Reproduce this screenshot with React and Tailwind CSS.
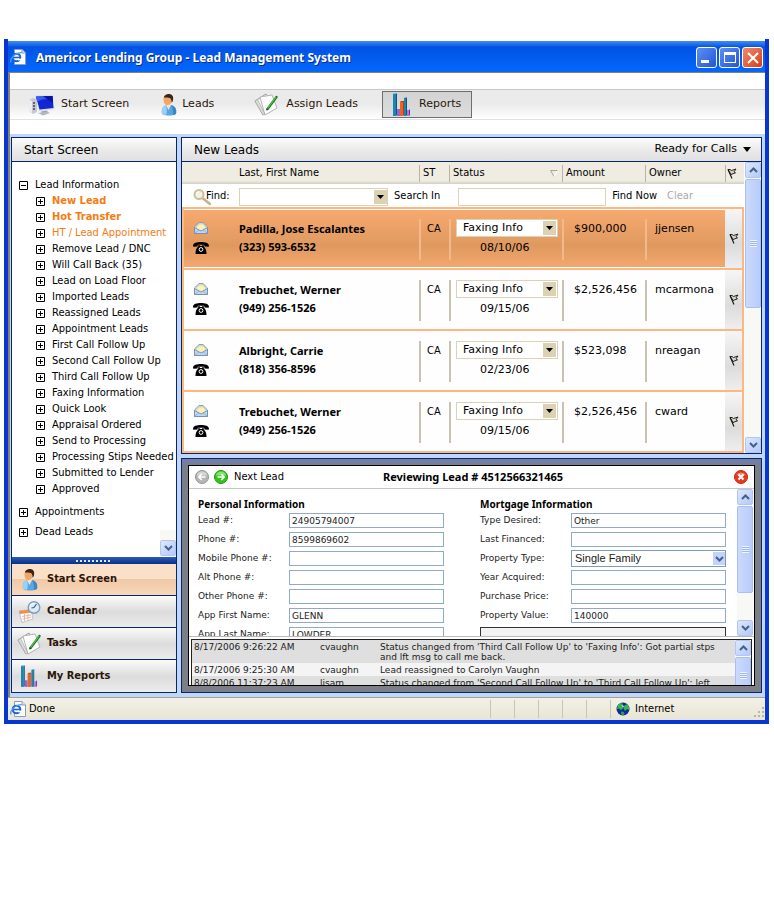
import React from "react";

const tahoma = "font-['DejaVu_Sans_Condensed','DejaVu_Sans',sans-serif]";
const verdana = "font-['DejaVu_Sans',sans-serif]";
const trebuchet = "font-['Noto_Sans','Open_Sans',sans-serif]";

/* ---------- icons ---------- */

function BrowserIcon({ className }) {
  return (
    <svg className={className} viewBox="0 0 16 16" aria-hidden="true">
      <path d="M4.500 .5h7.500l3.500 3.500v11.500h-11z" fill="#fff" stroke="#8a9cc0" />
      <path d="M12 .5v3.500h3.500" fill="#dfe6f5" stroke="#8a9cc0" />
      <circle cx="6.500" cy="8.500" r="3.800" fill="#fff" stroke="#1f63d6" strokeWidth="2" />
      <path d="M3 8.500h7" stroke="#1f63d6" strokeWidth="1.600" />
      <path d="M8 9.600h4v1.800H8z" fill="#fff" />
      <path d="M1.200 13.500C-.8 10.500 5 3.500 11.800 3.600" fill="none" stroke="#4f9cf0" strokeWidth="1.300" />
    </svg>
  );
}

function MonitorIcon({ className }) {
  return (
    <svg className={className} viewBox="0 0 26 22" aria-hidden="true">
      <path d="M0 6l4-2 4 1v13l-4 2-4-3z" fill="#c6c8ce" />
      <path d="M0 6l3 1v12l-3-2z" fill="#ecedf0" />
      <path d="M5 8v9" stroke="#555a66" strokeWidth="1.800" strokeDasharray="2 1" />
      <path d="M6 1.500L24 1l1.500 14L10 17.500z" fill="#d9dde8" />
      <path d="M7 2.500L23.500 2l1 12L10.500 15.500z" fill="#1226d2" />
      <path d="M7 2.500L23.500 2l.4 4C18 4 12 5 8 8z" fill="#3a5cee" />
      <path d="M14 2.300l9.500-.3.500 7z" fill="#0810a0" />
      <path d="M12 17.500l6-1 1 2.500-6 .5z" fill="#9aa0ac" />
      <path d="M9 19l9-1.500 3 1.500-7 2.500z" fill="#b3b7c0" />
    </svg>
  );
}

function PersonIcon({ className }) {
  return (
    <svg className={className} viewBox="0 0 16 22" aria-hidden="true">
      <path d="M1 20c-1-5 1-8 4-9h5c4 1 6 4 5 9-4 2-10 2-14 0z" fill="#5ba6e2" />
      <path d="M1 20c-1-5 1-8 4-9 1 4 1 7 0 10z" fill="#9bd0f7" />
      <path d="M10 11c4 1 6 4 5 9l-3 1c0-4 0-7-2-10z" fill="#3b86c9" />
      <path d="M5 9h5v2l-2.500 5L5 11z" fill="#f3e3d2" />
      <path d="M2.500 4.500c0-4 8-4 8 0 .5 4-1 6.500-4 6.500s-4-2.500-4-6.500z" fill="#f0a763" />
      <path d="M3 3.500C3 1.500 5.500 0 8 0s5 2 4 6c0 1-.8 2.500-1.500 2.500.2-2-.5-4-1.500-4.500-2-1-4-.5-6-.5z" fill="#3a2417" />
    </svg>
  );
}

function NotesIcon({ className }) {
  return (
    <svg className={className} viewBox="0 0 25 23" aria-hidden="true">
      <path d="M1 8L12 1l7 12-10 9z" fill="#f4f4f4" stroke="#9a9a9a" />
      <path d="M6 4L18 2l5 13-12 7z" fill="#fff" stroke="#b4b4b4" />
      <path d="M1 8l8 14 2-.5L3.500 6.500z" fill="#dcdcdc" stroke="#9a9a9a" strokeWidth=".5" />
      <path d="M13.500 16L22.500 4" stroke="#197a1c" strokeWidth="2.400" strokeLinecap="round" />
      <path d="M13.500 15.500L22 4" stroke="#52d04a" strokeWidth="1.100" />
      <path d="M12 17.500l.8-2.300 1.500 1.200z" fill="#333" />
    </svg>
  );
}

function BarsIcon({ className }) {
  return (
    <svg className={className} viewBox="0 0 18 24" aria-hidden="true">
      <path d="M0 1h3v22H0z" fill="#1b87b0" />
      <path d="M3 1l1-1v22l-1 1z" fill="#0d5674" />
      <path d="M0 1l1-1h3L3 1z" fill="#5cc0e0" />
      <path d="M4 16h3v7H4z" fill="#a05fd0" />
      <path d="M7 9h3v14H7z" fill="#e8622a" />
      <path d="M7 9l1-1h3v14l-1 1V9z" fill="#b43e12" />
      <path d="M11 5h2v18h-2z" fill="#1b87b0" />
      <path d="M13 5l1-1v18l-1 1z" fill="#0d5674" />
      <path d="M11 5l1-1h2l-1 1z" fill="#5cc0e0" />
      <path d="M14 17h2v6h-2z" fill="#b076dc" />
      <path d="M16 17l1-1v6l-1 1z" fill="#6d3499" />
    </svg>
  );
}

function CalendarIcon({ className }) {
  return (
    <svg className={className} viewBox="0 0 22 22" aria-hidden="true">
      <path d="M0 10l12-1.500 2 9.500-11 3.500z" fill="#fff" stroke="#b7b7b7" strokeWidth=".8" />
      <path d="M0 10l12-1.500.6 3L.9 13z" fill="#f08a4e" />
      <path d="M3 15.500l9-1.500M3.500 18l9-2M5.500 13v7M9 12.500v7" stroke="#e3a88a" strokeWidth=".8" />
      <circle cx="15" cy="6.500" r="5.800" fill="#dcebf6" stroke="#7f9db8" strokeWidth="1.400" />
      <path d="M17.500 3L15 6.500 12.500 7" fill="none" stroke="#365f86" strokeWidth="1.200" />
      <path d="M11 5a4 4 0 0 1 4-2.500" stroke="#fff" fill="none" />
    </svg>
  );
}

function EnvelopeIcon() {
  return (
    <svg className="h-3 w-[14px]" viewBox="0 0 14 12" aria-hidden="true">
      <path d="M.5 5L5 .6h4L13.500 5v6.500H.5z" fill="#dbe9f7" stroke="#8095b5" />
      <path d="M2.500 5l3-3h4l2 3v2L7 9 2.500 7z" fill="#fbf3b5" stroke="#c9bf80" strokeWidth=".5" />
      <path d="M.5 5.500L7 9l6.500-3.500v6H.5z" fill="#bcd8f3" stroke="#6d87ad" strokeWidth=".8" />
      <path d="M.8 11.300L5 8M13.200 11.300L9 8" stroke="#8fa9ca" strokeWidth=".8" />
    </svg>
  );
}

function PhoneIcon() {
  return (
    <svg className="h-3 w-4" viewBox="0 0 16 12" aria-hidden="true">
      <path d="M0 4C0 .8 4 0 8 0s8 .8 8 4l-.5.800-4-.3-.3-1.800H4.800l-.3 1.800-4 .3z" fill="#000" />
      <path d="M5.300 3h1.400v1h2.600V3h1.400v1.500C13 6 13.500 9 13.500 12h-11c0-3 .5-6 2.800-7.500z" fill="#000" />
      <circle cx="8" cy="7.500" r="1.900" fill="none" stroke="#fff" />
    </svg>
  );
}

function FlagIcon() {
  return (
    <svg className="mx-auto block h-[11px] w-[10px]" viewBox="0 0 10 11" aria-hidden="true">
      <path d="M1 1.500h2l1.500 1L9 1 7 3.800l1.500 1L4 6.500z" fill="#d9d4c6" stroke="#111" strokeWidth=".9" />
      <path d="M1 1.500L5 10.500" stroke="#111" strokeWidth="1.100" />
    </svg>
  );
}

function SearchIcon() {
  return (
    <svg className="h-4 w-[18px] shrink-0" viewBox="0 0 18 16" aria-hidden="true">
      <path d="M10 9.500l7 5.500" stroke="#c9b08a" strokeWidth="2.500" strokeLinecap="round" />
      <circle cx="6" cy="5.500" r="4.500" fill="#f5f0e2" stroke="#cdbf9a" strokeWidth="2" />
      <path d="M3.500 5.500a2.500 2.500 0 0 1 2.500-2.500" stroke="#fff" fill="none" />
    </svg>
  );
}

function GlobeIcon() {
  return (
    <svg className="h-[14px] w-[14px]" viewBox="0 0 14 14" aria-hidden="true">
      <circle cx="7" cy="7" r="6.500" fill="#102a9c" />
      <path d="M2 3l3-2 2 1-1 2 1.500 2L5 8 3 6.500 1 7z" fill="#35b84a" />
      <path d="M8 4l3-2 2 3 .3 3-2.300-1L9 9 7.500 6z" fill="#35b84a" />
      <path d="M5 9.500l3 .5.500 2L7 13.500 5 12z" fill="#2d9f41" />
      <path d="M5.500 3l2.500 1-1 1.500z" fill="#fff" />
    </svg>
  );
}

function NavArrow({ green, flip }) {
  return (
    <svg className="h-[14px] w-[14px]" viewBox="0 0 14 14" aria-hidden="true">
      <circle cx="7" cy="7" r="6.500" fill={green ? "#35c21c" : "#b5b5b5"} stroke={green ? "#279614" : "#969696"} />
      <path d="M2 5.500a5 4 0 0 1 10 0z" fill={green ? "#83e56d" : "#d6d6d6"} />
      <path d={flip ? "M10.500 7H4M6.800 4L3.800 7l3 3" : "M3.500 7H10M7.200 4l3 3-3 3"} fill="none" stroke="#fff" strokeWidth="1.600" />
    </svg>
  );
}

function Triangle() {
  return (
    <svg className="h-[4px] w-[7px]" viewBox="0 0 7 4" aria-hidden="true">
      <path d="M0 0h7L3.500 4z" fill="#000" />
    </svg>
  );
}

function Chevron({ up }) {
  return (
    <svg className="h-[6px] w-[9px]" viewBox="0 0 9 6" aria-hidden="true">
      <path d={up ? "M1 5l3.500-3.500L8 5" : "M1 1l3.500 3.500L8 1"} fill="none" stroke="#44608f" strokeWidth="2" />
    </svg>
  );
}

/* ---------- shared parts ---------- */

function ScrollButton({ up, label }) {
  return (
    <button
      aria-label={label}
      className="flex h-4 w-full shrink-0 items-center justify-center rounded-[2px] border border-[#b3c6f0] bg-linear-to-br from-[#dde8fd] to-[#b3c9f7]"
    >
      <Chevron up={up} />
    </button>
  );
}

function ScrollBar({ name, thumb, down = true }) {
  return (
    <div className="flex w-4 shrink-0 flex-col bg-[#f8f8f5]">
      <ScrollButton up label={`Scroll ${name} up`} />
      <div
        className={`mt-px flex items-center justify-center rounded-[2px] border border-[#a9bff0] bg-linear-to-r from-[#cbdafc] to-[#b8ccfb] ${thumb}`}
      >
        <span className="h-[7px] w-[7px] bg-[repeating-linear-gradient(#eef4ff_0_1px,#9db6ee_1px_2px)]" />
      </div>
      {down && (
        <div className="mt-auto">
          <ScrollButton label={`Scroll ${name} down`} />
        </div>
      )}
    </div>
  );
}

function PanelHeader({ title, children }) {
  return (
    <header className="flex h-6 items-center justify-between border-b border-[#0a246a] bg-linear-to-b from-[#fcfcfc] via-[#ebebeb] to-[#e0e0e0] pr-[10px] pl-3">
      <h2 className={`${verdana} text-[12px] leading-6`}>{title}</h2>
      {children}
    </header>
  );
}

/* ---------- title bar and toolbar ---------- */

function TitleBar() {
  const box = "flex h-[21px] w-[21px] items-center justify-center rounded-[3px] border border-white";
  return (
    <div className="flex h-[31px] items-center bg-linear-to-b from-[#3f8cf3] via-[#0153e3] via-20% to-[#0468fd] pr-[2px]">
      <BrowserIcon className="ml-[2px] h-4 w-4" />
      <h1 className={`${trebuchet} ml-[10px] flex-1 pt-[2px] text-[12px] font-bold text-white [text-shadow:1px_1px_0_#0a2a80]`}>
        Americor Lending Group - Lead Management System
      </h1>
      <div className="mt-[2px] flex gap-[2px]">
        <button aria-label="Minimize" className={`${box} bg-linear-to-br from-[#5f8ff0] to-[#2254d8]`}>
          <span className="mt-2 mr-1 h-[3px] w-2 bg-white" />
        </button>
        <button aria-label="Maximize" className={`${box} bg-linear-to-br from-[#5f8ff0] to-[#2254d8]`}>
          <span className="h-[11px] w-3 border border-t-[3px] border-white" />
        </button>
        <button aria-label="Close" className={`${box} bg-linear-to-br from-[#ee8a6a] to-[#d63a10]`}>
          <svg className="h-3 w-3" viewBox="0 0 12 12" aria-hidden="true">
            <path d="M1 1l10 10M11 1L1 11" stroke="#fff" strokeWidth="2" />
          </svg>
        </button>
      </div>
    </div>
  );
}

function Toolbar() {
  const item = `${verdana} flex h-[27px] items-center text-[11px] text-[#2b1608]`;
  return (
    <nav
      aria-label="Main"
      className="mt-4 mb-[14px] flex h-[31px] items-center border-y border-t-[#c8c8c8] border-b-[#e2e2e2] bg-linear-to-b from-[#ebebeb] via-[#eaeaea] via-45% to-white pl-[19px]"
    >
      <button className={item}>
        <MonitorIcon className="mr-[6px] h-[22px] w-[26px]" />
        Start Screen
      </button>
      <button className={`${item} ml-8`}>
        <PersonIcon className="mr-[5px] h-[22px] w-4" />
        Leads
      </button>
      <button className={`${item} ml-10`}>
        <NotesIcon className="mr-[7px] h-[23px] w-[25px]" />
        Assign Leads
      </button>
      <button className={`${item} ml-6 w-[90px] border border-[#6e6e6e] bg-linear-to-b from-[#d2d2d2] to-[#dedede] pl-[10px]`}>
        <BarsIcon className="mr-2 h-6 w-[18px]" />
        Reports
      </button>
    </nav>
  );
}

/* ---------- sidebar ---------- */

const leadFolders = [
  "New Lead",
  "Hot Transfer",
  "HT / Lead Appointment",
  "Remove Lead / DNC",
  "Will Call Back (35)",
  "Lead on Load Floor",
  "Imported Leads",
  "Reassigned Leads",
  "Appointment Leads",
  "First Call Follow Up",
  "Second Call Follow Up",
  "Third Call Follow Up",
  "Faxing Information",
  "Quick Look",
  "Appraisal Ordered",
  "Send to Processing",
  "Processing Stips Needed",
  "Submitted to Lender",
  "Approved",
];

function Expander({ open, name }) {
  return (
    <button aria-label={`${open ? "Collapse" : "Expand"} ${name}`} aria-expanded={!!open} className="shrink-0">
      <svg className="block h-[9px] w-[9px]" viewBox="0 0 9 9" aria-hidden="true">
        <path d={open ? "M.5 .5h8v8h-8zM2 4.500h5" : "M.5 .5h8v8h-8zM2 4.500h5M4.500 2v5"} fill="none" stroke="#000" />
      </svg>
    </button>
  );
}

function TreeItem({ name, open, tone = "" }) {
  return (
    <div className="flex h-4 items-center gap-[7px] whitespace-nowrap">
      <Expander open={open} name={name} />
      <span className={tone}>{name}</span>
    </div>
  );
}

function leadTone(index) {
  if (index < 2) return "font-bold text-[#f57c14]";
  return index === 2 ? "text-[#f57c14]" : "";
}

const shortcuts = [
  { name: "Start Screen", icon: <PersonIcon className="h-[22px] w-4" />, active: true },
  { name: "Calendar", icon: <CalendarIcon className="h-[22px] w-[22px]" /> },
  { name: "Tasks", icon: <NotesIcon className="h-[23px] w-[25px]" /> },
  { name: "My Reports", icon: <BarsIcon className="h-[23px] w-[17px]" /> },
];

function Sidebar() {
  return (
    <aside className="flex w-[166px] shrink-0 flex-col border border-[#0a246a] bg-white">
      <PanelHeader title="Start Screen" />
      <div className={`${tahoma} relative flex-1 pt-[15px] pl-[7px] text-[11px]`}>
        <ul>
          <li>
            <TreeItem name="Lead Information" open />
            <ul className="pl-[17px]">
              {leadFolders.map((name, i) => (
                <li key={name}>
                  <TreeItem name={name} tone={leadTone(i)} />
                </li>
              ))}
            </ul>
          </li>
          <li className="mt-[7px]">
            <TreeItem name="Appointments" />
          </li>
          <li className="mt-1">
            <TreeItem name="Dead Leads" />
          </li>
        </ul>
        <div className="absolute right-0 bottom-px flex h-[26px] w-4 flex-col justify-end bg-[#f8f8f5]">
          <ScrollButton label="Scroll folders down" />
        </div>
      </div>
      <div className="flex h-[7px] items-center justify-center bg-linear-to-b from-[#2c5cb8] to-[#0a2f86]">
        <span className="h-[2px] w-9 bg-[repeating-linear-gradient(90deg,#dce8ff_0_2px,transparent_2px_4px)]" />
      </div>
      <nav aria-label="Shortcuts">
        {shortcuts.map(({ name, icon, active }) => (
          <button
            key={name}
            className={`${tahoma} flex h-8 w-full items-center border-b border-[#0a246a] text-[11px] font-bold text-[#2b1608] last:border-b-0 ${
              active
                ? "bg-linear-to-b from-[#fadfc9] from-48% via-[#f0c8a6] via-50% to-[#f8d8bd]"
                : "bg-linear-to-b from-[#fbfbfb] via-[#dcdcdc] via-52% to-[#ececec]"
            }`}
          >
            <span className="flex w-[35px] justify-center">{icon}</span>
            {name}
          </button>
        ))}
      </nav>
    </aside>
  );
}

/* ---------- lead list ---------- */

const leads = [
  { name: "Padilla, Jose Escalantes", phone: "(323) 593-6532", date: "08/10/06", amount: "$900,000", owner: "jjensen" },
  { name: "Trebuchet, Werner", phone: "(949) 256-1526", date: "09/15/06", amount: "$2,526,456", owner: "mcarmona" },
  { name: "Albright, Carrie", phone: "(818) 356-8596", date: "02/23/06", amount: "$523,098", owner: "nreagan" },
  { name: "Trebuchet, Werner", phone: "(949) 256-1526", date: "09/15/06", amount: "$2,526,456", owner: "cward" },
];

function LeadRow({ lead, selected }) {
  const cell = `border-b-2 border-[#fdb881] p-0 ${
    selected
      ? "bg-linear-to-b from-[#f7aa70] via-[#df995f] via-62% to-[#f3a86f] shadow-[inset_0_1px_0_#fff,inset_0_-1px_0_#fff]"
      : "bg-[#fefefe]"
  }`;
  const divider = `mt-[2px] flex h-[41px] flex-col border-l-2 ${
    selected ? "border-[#f2b98d]" : "border-[#c9c2b0]"
  }`;
  return (
    <tr className="h-[61px] align-middle">
      <td className={`${cell} border-l-2`}>
        <div className="flex flex-col items-center gap-2 pr-[15px] pb-[2px]">
          <EnvelopeIcon />
          <PhoneIcon />
        </div>
      </td>
      <td className={`${cell} ${trebuchet} text-[11px] leading-[18px] font-bold`}>
        <div className="pb-[2px] pl-[7px]">
          <div>{lead.name}</div>
          <div>{lead.phone}</div>
        </div>
      </td>
      <td className={cell}>
        <div className={`${divider} ${tahoma} pl-[6px] text-[11px] leading-5`}>CA</div>
      </td>
      <td className={cell}>
        <div className={`${divider} ${verdana} pl-[5px] text-[11px]`}>
          <span className="relative block h-[18px] w-[102px]">
            <select
              aria-label={`Status of ${lead.name}`}
              className="block h-[18px] w-full appearance-none border border-[#dcd2b6] bg-white pl-[6px] text-[11px] leading-4"
            >
              <option>Faxing Info</option>
            </select>
            <span className="pointer-events-none absolute top-[2px] right-[2px] flex h-[14px] w-[13px] items-center justify-center bg-[#dbd1b3]">
              <Triangle />
            </span>
          </span>
          <span className="pl-6 leading-[22px]">{lead.date}</span>
        </div>
      </td>
      <td className={cell}>
        <div className={`${divider} ${verdana} pl-[10px] text-[11px] leading-5`}>{lead.amount}</div>
      </td>
      <td className={cell}>
        <div className={`${divider} ${verdana} pl-2 text-[11px] leading-5`}>{lead.owner}</div>
      </td>
      <td className="border-r-2 border-b-2 border-[#fdb881] bg-linear-to-b from-[#f6f6f6] via-[#dcdcdc] via-60% to-[#eeeeee] p-0">
        <FlagIcon />
      </td>
    </tr>
  );
}

function FindBar() {
  return (
    <div className={`${tahoma} flex items-center pt-[2px] pl-[11px] text-[11px]`}>
      <SearchIcon />
      <label htmlFor="find" className="-ml-[5px] w-[33px]">
        Find:
      </label>
      <span className="relative h-[18px] w-[149px]">
        <input id="find" className="block h-[18px] w-full border border-[#dcd2b6] bg-white pr-5 pl-1" />
        <span className="pointer-events-none absolute top-[2px] right-px flex h-[14px] w-[13px] items-center justify-center bg-[#dbd1b3]">
          <Triangle />
        </span>
      </span>
      <label htmlFor="search-in" className="w-[70px] pl-[6px]">
        Search In
      </label>
      <input id="search-in" className="h-[18px] min-w-0 flex-1 border border-[#dcd2b6] bg-white px-1" />
      <button className="ml-[6px] whitespace-nowrap">Find Now</button>
      <button className="mr-[51px] ml-[10px] text-[#a9a9a9]">Clear</button>
    </div>
  );
}

function LeadList() {
  const head = "bg-linear-to-b from-[#efece1] from-85% to-[#d2cfc2] p-0 text-left font-normal";
  const label = "flex h-[17px] items-center justify-between border-l border-[#b9b5a5] pl-[3px]";
  return (
    <section aria-label="New Leads" className="border border-[#0a246a] bg-white">
      <PanelHeader title="New Leads">
        <button className={`${verdana} flex items-center gap-[6px] text-[11px]`}>
          Ready for Calls
          <svg className="h-[5px] w-2" viewBox="0 0 8 5" aria-hidden="true">
            <path d="M0 0h8L4 5z" fill="#000" />
          </svg>
        </button>
      </PanelHeader>
      <div className="flex">
        <table className="min-w-0 flex-1 table-fixed border-separate border-spacing-0">
          <colgroup>
            <col className="w-[50px]" />
            <col />
            <col className="w-[30px]" />
            <col className="w-[113px]" />
            <col className="w-[83px]" />
            <col className="w-[80px]" />
            <col className="w-[19px]" />
          </colgroup>
          <thead className={`${tahoma} text-[11px]`}>
            <tr className="h-[22px]">
              <th className={head} aria-label="Contact" />
              <th className={head}>
                <div className="pl-[7px]">Last, First Name</div>
              </th>
              <th className={head}>
                <div className={label}>ST</div>
              </th>
              <th className={head}>
                <div className={label}>
                  Status
                  <svg className="mr-1 h-[7px] w-2" viewBox="0 0 8 7" aria-hidden="true">
                    <path d="M.5 .5h7M.5 .5l3.500 6" fill="none" stroke="#aaa594" />
                    <path d="M7.500 1L4 6.500" stroke="#fff" />
                  </svg>
                </div>
              </th>
              <th className={head}>
                <div className={label}>Amount</div>
              </th>
              <th className={head}>
                <div className={label}>Owner</div>
              </th>
              <th className={head} aria-label="Flag">
                <div className="flex h-[17px] items-center border-l border-[#b9b5a5] pr-[6px]">
                  <FlagIcon />
                </div>
              </th>
            </tr>
            <tr className="h-[25px]">
              <td colSpan={7} className="border-b-2 border-[#fdb881] p-0">
                <FindBar />
              </td>
            </tr>
          </thead>
          <tbody>
            {leads.map((lead, i) => (
              <LeadRow key={i} lead={lead} selected={i === 0} />
            ))}
          </tbody>
        </table>
        <div className="flex pl-px">
          <ScrollBar name="leads" thumb="h-[129px]" />
        </div>
      </div>
    </section>
  );
}

/* ---------- lead details ---------- */

const personal = [
  ["Lead #:", "24905794007"],
  ["Phone #:", "8599869602"],
  ["Mobile Phone #:", ""],
  ["Alt Phone #:", ""],
  ["Other Phone #:", ""],
  ["App First Name:", "GLENN"],
  ["App Last Name:", "LOWDER"],
];

const mortgage = [
  ["Type Desired:", "Other"],
  ["Last Financed:", ""],
  ["Property Type:", "Single Family", "select"],
  ["Year Acquired:", ""],
  ["Purchase Price:", ""],
  ["Property Value:", "140000"],
];

function Field({ label, value, kind }) {
  const id = label.toLowerCase().replace(/[^a-z]+/g, "-");
  return (
    <div className="flex h-[19px] items-center">
      <label htmlFor={id} className="w-[91px] shrink-0">
        {label}
      </label>
      {kind === "select" ? (
        <span className="relative min-w-0 flex-1">
          <select
            id={id}
            className="block h-[17px] w-full appearance-none border border-[#7f9db9] bg-white pl-[3px] font-['Liberation_Sans',Arial,sans-serif] text-[11px] leading-[15px] text-[#222]"
          >
            <option>{value}</option>
          </select>
          <span className="pointer-events-none absolute top-[2px] right-px flex h-[13px] w-3 items-center justify-center bg-[#c3d3fb]">
            <Chevron />
          </span>
        </span>
      ) : (
        <input id={id} defaultValue={value} className="h-[15px] min-w-0 flex-1 border border-[#8fabc7] bg-white px-[2px]" />
      )}
    </div>
  );
}

function FieldGroup({ title, fields, children }) {
  return (
    <fieldset className="min-w-0">
      <legend className={`${trebuchet} text-[10px] leading-[14px] font-bold text-black`}>{title}</legend>
      {fields.map(([label, value, kind]) => (
        <Field key={label} label={label} value={value} kind={kind} />
      ))}
      {children}
    </fieldset>
  );
}

const history = [
  [
    "8/17/2006 9:26:22 AM",
    "cvaughn",
    "Status changed from 'Third Call Follow Up' to 'Faxing Info': Got partial stps and lft msg to call me back.",
  ],
  ["8/17/2006 9:25:30 AM", "cvaughn", "Lead reassigned to Carolyn Vaughn"],
  ["8/8/2006 11:37:23 AM", "lisam", "Status changed from 'Second Call Follow Up' to 'Third Call Follow Up': left"],
];

function LeadDetails() {
  return (
    <section
      aria-label="Lead details"
      className="border border-[#0a246a] bg-[#7d8088] bg-linear-to-b from-[#6f7fae] to-[#7c7f86] to-4% p-[6px]"
    >
      <div className={`${verdana} border border-black bg-white text-[9px] text-[#222]`}>
        <header className="flex h-[23px] items-center border-b border-[#c4c8c4] px-[6px] text-black">
          <button aria-label="Previous lead">
            <NavArrow flip />
          </button>
          <button className={`${tahoma} ml-[5px] flex w-[169px] items-center gap-[6px] text-[11px]`}>
            <NavArrow green />
            Next Lead
          </button>
          <h2 className={`${trebuchet} flex-1 text-[11px] font-bold`}>Reviewing Lead # 4512566321465</h2>
          <button aria-label="Close lead">
            <svg className="h-[14px] w-[14px]" viewBox="0 0 14 14" aria-hidden="true">
              <circle cx="7" cy="7" r="6.500" fill="#e8381c" stroke="#c42a12" />
              <path d="M2.500 5a4.800 4 0 0 1 9 0z" fill="#f58a70" />
              <path d="M4.500 4.500l5 5M9.500 4.500l-5 5" stroke="#fff" strokeWidth="2.200" />
            </svg>
          </button>
        </header>
        <div className="flex h-[147px] overflow-hidden">
          <div className="grid flex-1 grid-cols-2 gap-9 pt-2 pr-[11px] pl-[9px]">
            <FieldGroup title="Personal Information" fields={personal} />
            <FieldGroup title="Mortgage Information" fields={mortgage}>
              <div className="mt-[2px] h-6 border border-[#333] bg-[#f3f3f3]" />
            </FieldGroup>
          </div>
          <div className="flex pr-px">
            <ScrollBar name="form" thumb="h-[87px]" />
          </div>
        </div>
        <div className="h-[49px] overflow-hidden border-t border-[#b8b8b8] px-[2px] pt-[2px]">
          <div className="flex h-14 border border-[#222]">
            <table className="flex-1 table-fixed self-start leading-[10px]">
              <colgroup>
                <col className="w-[127px]" />
                <col className="w-[60px]" />
                <col />
              </colgroup>
              <tbody>
                {history.map(([time, user, note]) => (
                  <tr key={time} className="bg-[#dfdfdf] align-top even:bg-[#f4f4f4]">
                    <td className="pt-[2px] pb-px pl-[2px]">{time}</td>
                    <td className="pt-[2px] pb-px pl-px">{user}</td>
                    <td className="pt-[2px] pr-[14px] pb-px pl-px">{note}</td>
                  </tr>
                ))}
              </tbody>
            </table>
            <ScrollBar name="history" thumb="h-[38px]" down={false} />
          </div>
        </div>
      </div>
    </section>
  );
}

/* ---------- status bar ---------- */

function StatusBar() {
  return (
    <footer className={`${tahoma} flex h-[23px] items-center border-t border-[#a5a294] bg-linear-to-b from-[#f3f1e6] to-[#e8e5d5] pl-[2px] text-[11px]`}>
      <BrowserIcon className="mr-[3px] h-4 w-4" />
      <span className="flex-1">Done</span>
      {[0, 1, 2, 3, 4].map((n) => (
        <span key={n} className="h-[18px] w-6 border-l border-[#c9c5b2]" />
      ))}
      <span className="flex h-[18px] w-[155px] items-center gap-[5px] border-l border-[#c9c5b2] pl-[5px]">
        <GlobeIcon />
        <span className="flex-1">Internet</span>
        <svg className="h-[11px] w-[11px] self-end" viewBox="0 0 11 11" aria-hidden="true">
          <path d="M8 0h2v2H8zM8 4h2v2H8zM4 4h2v2H4zM8 8h2v2H8zM4 8h2v2H4zM0 8h2v2H0z" fill="#b9b5a0" />
        </svg>
      </span>
    </footer>
  );
}

export default function App() {
  return (
    <main className="min-h-screen bg-white pt-[39px] pr-[5px] pl-1 text-black">
      <div className="border-x-4 border-b-4 border-[#0836d0] bg-white pt-[2px]">
        <TitleBar />
        <div className="border-t border-l-2 border-[#85826f]">
          <Toolbar />
          <div className="flex gap-1 bg-[#c0d6fb] px-px pt-[3px] pb-1">
            <Sidebar />
            <div className="flex min-w-0 flex-1 flex-col gap-1 pr-[2px]">
              <LeadList />
              <LeadDetails />
            </div>
          </div>
        </div>
        <StatusBar />
      </div>
    </main>
  );
}
